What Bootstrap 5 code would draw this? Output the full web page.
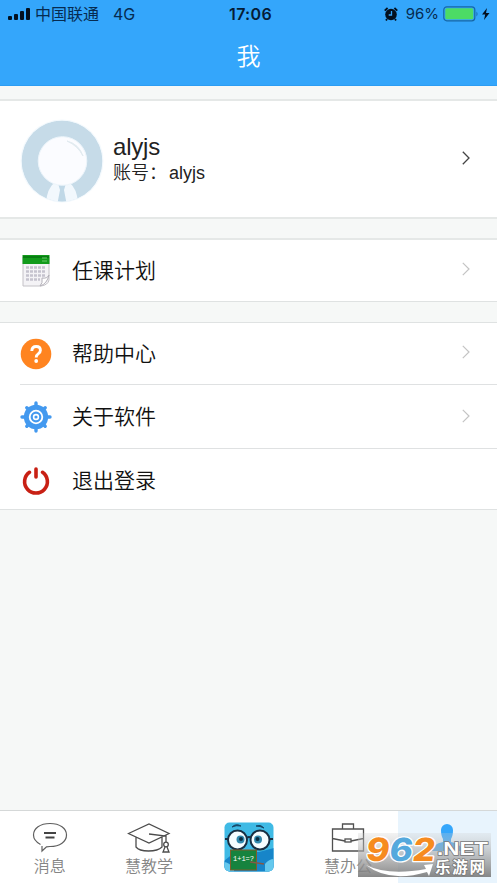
<!DOCTYPE html>
<html lang="zh-CN">
<head>
<meta charset="utf-8">
<meta name="viewport" content="width=device-width, initial-scale=1">
<title>我</title>
<link href="https://cdn.jsdelivr.net/npm/bootstrap@5.3.0/dist/css/bootstrap.min.css" rel="stylesheet">
<style>
body{font-family:"Liberation Sans","Noto Sans CJK SC",sans-serif;background:#f6f8f7;color:#111;font-weight:350}
.screen{height:883px}
.top-bar{height:86px;background:#34a6fb;border-bottom:1px solid #2c9df3}
.status{height:28px;padding:0 6px 0 8px;font-family:Inter,"Noto Sans CJK SC",sans-serif;font-size:15px;line-height:28px;color:#062b50;font-weight:400}
.status>div{flex:1 1 0}
.carrier{font-size:16px;margin-left:5px}
.network{font-size:16px;margin-left:14px}
.clock{font-weight:600;font-size:16px;color:#051c36;letter-spacing:.3px;padding-left:2px}
.page-title{font-size:24px;line-height:57px;color:#fff}
.panel{background:#fff;border-top:1px solid #dfe2e2;border-bottom:1px solid #dfe2e2}
.profile{height:120px;margin-top:13px;padding:4px 27px 0 20px;border-width:2px 0;border-color:#e5e8e7}
.user-name{font-size:24px;line-height:27px;color:#222;letter-spacing:-.2px}
.account{font-size:18px;line-height:27px;color:#222}
.account span{margin-left:2px}
.details{margin-left:9px;padding-bottom:3px}
.profile .arrow{margin-bottom:6px}
.group{margin-top:20px}
.plan{border-top:2px solid #e5e8e7;margin-top:19px}
.entry{height:63.5px;margin-left:20px;padding-right:27px;font-size:21px;line-height:30px;color:#111}
.entry:first-child{height:61px}
.entry+.entry{border-top:1.5px solid #dfe1e2;padding-top:2px}
.entry .glyph{width:32px;height:32px;margin-right:20px}
.entry .arrow{margin-bottom:3px}
.entry.leave{height:61px;padding-top:4px}
.tabs{height:73px;background:#fff;border-top:1px solid #d5d8d8;font-size:16px;line-height:20px;color:#858585}
.tab{flex:1 1 0;min-width:0;padding-top:10px}
.tab.on{background:#e8f4fd}
.tab span{margin-top:4px}
.logo962{left:358px;top:833px}
svg{display:block;flex:none}
</style>
</head>
<body>
<div class="screen d-flex flex-column position-relative overflow-hidden">
  <header class="top-bar flex-shrink-0">
    <div class="status d-flex align-items-center">
      <div class="d-flex align-items-center">
        <svg width="22" height="14" viewBox="0 0 22 14" fill="#03101f"><rect y="9" width="4" height="4" rx="1"/><rect x="6" y="7" width="4" height="6" rx="1"/><rect x="12" y="4" width="4" height="9" rx="1"/><rect x="18" y="1" width="4" height="12" rx="1"/></svg>
        <span class="carrier">中国联通</span><span class="network">4G</span>
      </div>
      <span class="clock">17:06</span>
      <div class="d-flex align-items-center justify-content-end">
        <svg width="14" height="14" viewBox="0 0 14 14"><circle cx="7" cy="7.5" r="5.8" fill="#03101f"/><path d="M.7 3.6 3.6 1M13.3 3.6 10.4 1M3 12l-1 1.5M11 12l1 1.5" stroke="#03101f" stroke-width="1.8"/><path d="M7.5 4v4H4.7" fill="none" stroke="#34a6fb" stroke-width="1.3"/></svg>
        <span class="ms-2 me-1">96%</span>
        <svg width="48" height="16" viewBox="0 0 48 16"><rect x=".8" y=".8" width="31" height="14" rx="3" fill="#34a6fb" stroke="#1767a5" stroke-width="1.2"/><rect x="2.3" y="2.3" width="28" height="11" rx="1.5" fill="#4cdb65"/><path d="M33.5 5.5q2 2.5 0 5z" fill="#1767a5"/><path d="M44 2l-5 6.5h3.2L41 14l5.500-7H43z" fill="#03101f"/></svg>
      </div>
    </div>
    <div class="page-title text-center">我</div>
  </header>

  <section class="panel profile d-flex align-items-center flex-shrink-0">
    <svg width="84" height="84" viewBox="0 0 84 84">
      <defs><clipPath id="face"><circle cx="42" cy="42" r="40.500"/></clipPath></defs>
      <circle cx="42" cy="42" r="41.500" fill="#f3f9fd"/>
      <g clip-path="url(#face)"><circle cx="42" cy="42" r="40.500" fill="#c6dbe8"/>
      <path d="M34 64q-7 6-8 20h32q-1-14-8-20z" fill="#f2f8fd"/><path d="M38.500 66h7l-1.500 5 2.500 13h-9l2.500-13z" fill="#c0d8e7"/></g>
      <circle cx="42.500" cy="42" r="24.300" fill="#fbfcff" stroke="#edf5fb"/>
      <path d="M47 22q12 3 16 15-5-10-16-15z" fill="#e2ebf0" stroke="#e2ebf0"/>
    </svg>
    <div class="details flex-grow-1">
      <div class="user-name">alyjs</div>
      <div class="account">账号：<span>alyjs</span></div>
    </div>
    <svg class="arrow" width="8" height="14" viewBox="0 0 8 14" fill="none" stroke="#444" stroke-width="1.3"><path d="m.8.800 6.200 6.200-6.200 6.200"/></svg>
  </section>

  <section class="panel group plan flex-shrink-0">
    <div class="entry d-flex align-items-center">
      <svg class="glyph" viewBox="0 0 32 32"><path d="M3 2h26v23q-1 5-8 6H3z" fill="#f4f3f6" stroke="#c4c2c7"/><path d="M2.500 0h27v9h-27z" fill="#129b1b"/><path d="M3 1h26v2H3z" fill="#087d12"/><path d="M22 3h5M22 6h5" stroke="#69c96b"/><path d="M6 12.500h20M6 16.500h20M6 20.500h19M6 24.500h14" stroke="#c5c3ce" stroke-width="2.500" stroke-dasharray="3 1"/><path d="M29 20q-2 4-7 3 1 5-2 8 7-2 9-11z" fill="#fff" stroke="#b4b1b9"/></svg>
      <span class="flex-grow-1">任课计划</span>
      <svg class="arrow" width="8" height="14" viewBox="0 0 8 14" fill="none" stroke="#c4c4c4" stroke-width="1.2"><path d="m.8.800 6.200 6.200-6.200 6.200"/></svg>
    </div>
  </section>

  <section class="panel group flex-shrink-0">
    <div class="entry d-flex align-items-center">
      <svg class="glyph" viewBox="0 0 32 32"><circle cx="16" cy="16" r="15.300" fill="#ff8420"/><path d="M11.800 13q.2-4.500 4.400-4.500t4.200 3.800q0 2.200-2.200 3.600-2 1.400-2 3.500" fill="none" stroke="#fff" stroke-width="2.900"/><circle cx="16.200" cy="23" r="1.900" fill="#fff"/></svg>
      <span class="flex-grow-1">帮助中心</span>
      <svg class="arrow" width="8" height="14" viewBox="0 0 8 14" fill="none" stroke="#c4c4c4" stroke-width="1.2"><path d="m.8.800 6.200 6.200-6.200 6.200"/></svg>
    </div>
    <div class="entry d-flex align-items-center">
      <svg class="glyph" viewBox="0 0 32 32"><g stroke="#4399ef" stroke-width="3.400" stroke-linecap="round"><path d="M16 2v28M2 16h28M6.800 6.800l18.400 18.400M6.800 25.200 25.200 6.800"/></g><circle cx="16" cy="16" r="12.200" fill="#4399ef"/><circle cx="16" cy="16" r="6.300" fill="none" stroke="#fff" stroke-width="1.800"/><circle cx="16" cy="16" r="2.400" fill="none" stroke="#fff" stroke-width="1.600"/></svg>
      <span class="flex-grow-1">关于软件</span>
      <svg class="arrow" width="8" height="14" viewBox="0 0 8 14" fill="none" stroke="#c4c4c4" stroke-width="1.2"><path d="m.8.800 6.200 6.200-6.200 6.200"/></svg>
    </div>
    <div class="entry leave d-flex align-items-center">
      <svg class="glyph" viewBox="0 0 32 32" fill="none" stroke="#c82014" stroke-width="3.600" stroke-linecap="round"><path d="M9.500 7.300a11.400 11.400 0 1 0 13 0"/><path d="M16 4v8"/></svg>
      <span>退出登录</span>
    </div>
  </section>

  <nav class="tabs d-flex mt-auto flex-shrink-0">
    <div class="tab d-flex flex-column align-items-center">
      <svg width="36" height="32" viewBox="0 0 36 32" fill="none" stroke="#606060" stroke-width="1.200"><path d="M8.500 23.500C4 21 1.500 18 1.500 14 1.500 7.500 8 2.500 18 2.500S34.500 7.500 34.500 14 28 25.500 18 25.500q-2 0-3.500.3L10 30v-5"/><path d="M12 12h12M13.500 16.500h9" stroke-width="1.900" stroke="#444"/></svg>
      <span>消息</span>
    </div>
    <div class="tab d-flex flex-column align-items-center">
      <svg width="44" height="32" viewBox="0 0 44 32" fill="none" stroke="#4c4c4c" stroke-width="1.300"><path d="M1.500 12.500 22 3l20 9.500L22 22zM9 16v10q3 4 12.500 4T35 26V16M22 13l17 2v6"/><circle cx="39" cy="23.500" r="2.300"/><path d="M38 26l-2 5h6l-2-5"/></svg>
      <span>慧教学</span>
    </div>
    <div class="tab d-flex flex-column align-items-center">
      <svg width="50" height="52" viewBox="0 0 50 52">
        <defs><clipPath id="appTile"><rect x=".5" y="1.500" width="49" height="49" rx="5"/></clipPath></defs>
        <g clip-path="url(#appTile)"><rect width="50" height="52" fill="#3fbae5"/><path d="M0 40 11 31h24l15-4v25H0z" fill="#1785c9"/><path d="M0 41q5 0 10 7v4H0zM50 38q-5 0-9 5v9h9z" fill="#65c8ed"/></g>
        <g fill="#f5fcff" stroke="#182f43" stroke-width="2"><circle cx="13.500" cy="19" r="9.500"/><circle cx="36" cy="19" r="9.500"/><path d="M23 17q2-2 4 0M1 18h3M46 18h3" fill="none"/></g>
        <circle cx="16.500" cy="18.500" r="4" fill="#3188ad"/><circle cx="34" cy="18.500" r="4" fill="#3188ad"/><circle cx="17" cy="18" r="2" fill="#092b41"/><circle cx="33.500" cy="18" r="2" fill="#092b41"/>
        <path d="M8 6q4-4 9-1-5-1-9 1zM32 5q5-2 8 2-4-2-8-2z" fill="#174869" stroke="#174869"/>
        <rect x="6.500" y="29" width="26" height="20" fill="#16833e" stroke="#805d2b"/><text x="19.500" y="40" font-family="Liberation Mono,monospace" font-size="7" text-anchor="middle" fill="#fff">1+1=?</text><path d="M26 41l14 2" stroke="#855946" stroke-width="1.500"/>
      </svg>
    </div>
    <div class="tab d-flex flex-column align-items-center">
      <svg width="36" height="32" viewBox="0 0 36 32" fill="none" stroke="#505050" stroke-width="1.300"><path d="M2.500 8h31v22h-31zM12.500 8V3h11v5M2.500 17.500l12.500 2.500M21 20l12.500-2.500"/><rect x="15" y="18" width="6" height="3"/></svg>
      <span>慧办公</span>
    </div>
    <div class="tab on d-flex flex-column align-items-center">
      <svg width="36" height="32" viewBox="0 0 36 32" fill="#34a6fb"><path d="M12 9a6 6 0 0 1 12 0q0 6-2 9v3q10 2 12 9H2q2-7 12-9v-3q-2-3-2-9z"/></svg>
    </div>
  </nav>

  <svg class="logo962 position-absolute" width="134" height="44" viewBox="0 0 134 44">
    <defs><linearGradient id="plate" x2="0" y2="1"><stop stop-color="#ccc" stop-opacity=".25"/><stop offset=".5" stop-color="#aaa" stop-opacity=".7"/><stop offset="1" stop-color="#777" stop-opacity=".88"/></linearGradient></defs>
    <rect width="133" height="44" fill="url(#plate)"/>
    <text transform="translate(7 27.500) skewX(-8)" font-family="Inter,sans-serif" font-weight="800" font-size="32" stroke="#fff" stroke-width="2.500" stroke-linejoin="round" paint-order="stroke" textLength="69" lengthAdjust="spacingAndGlyphs" fill="#f68b1f">9<tspan fill="#55a9dd">6</tspan>2</text>
    <path d="M8 32q22 11 60 4l-2-4 9-1-4 12-2-4Q31 50 8 32z" fill="#fff"/>
    <g font-family="Liberation Sans,Noto Sans CJK SC,sans-serif" font-weight="700" fill="#fff" stroke="#777" stroke-width="1.500" paint-order="stroke"><text x="79" y="22" font-size="19" textLength="51" lengthAdjust="spacingAndGlyphs">.NET</text><text x="77" y="40" font-size="15.500" textLength="50">乐游网</text></g>
  </svg>
</div>
<script src="https://cdn.jsdelivr.net/npm/bootstrap@5.3.0/dist/js/bootstrap.bundle.min.js"></script>
</body>
</html>
